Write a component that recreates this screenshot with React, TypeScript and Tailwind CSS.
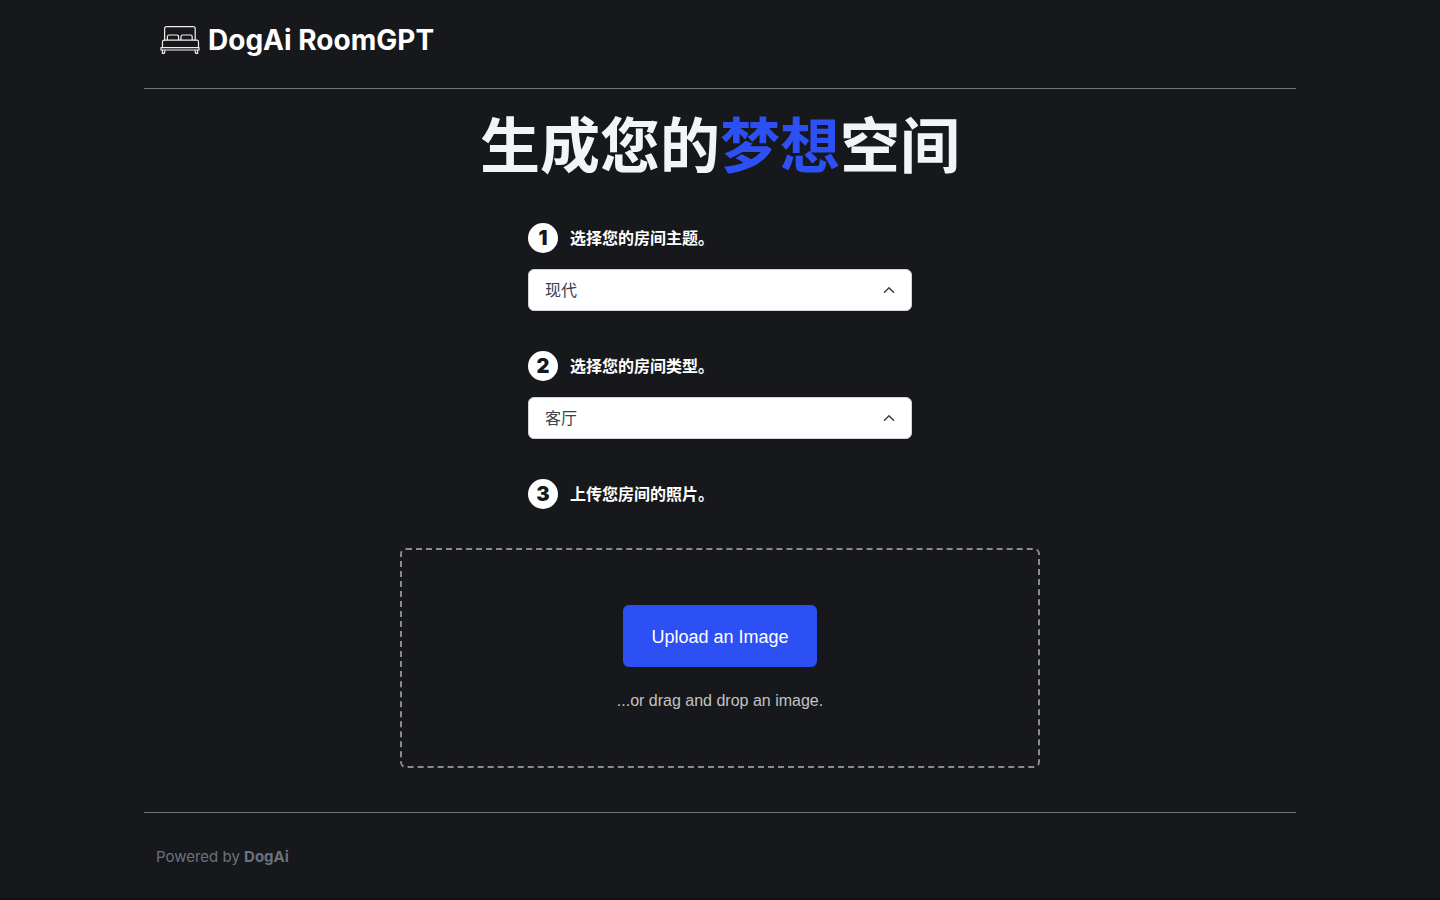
import React, { useState } from "react";
import { ChevronUp } from "lucide-react";

function BedIcon() {
  return (
    <svg viewBox="0 0 40 30" className="h-[30px] w-10 shrink-0" fill="none" stroke="#f1efea" strokeWidth="1.2" strokeLinejoin="round" aria-hidden="true">
      <path d="M4.6 15.5V3.6A2 2 0 0 1 6.600 1.600H33.200A2 2 0 0 1 35.200 3.600V15.500" />
      <path d="M7.400 15V11.800A1.800 1.800 0 0 1 9.200 10H16.800A1.800 1.800 0 0 1 18.600 11.800V15M21 15V11.800A1.800 1.800 0 0 1 22.800 10H30.400A1.800 1.800 0 0 1 32.200 11.800V15" />
      <path d="M2.500 22.500V16.800A1.600 1.600 0 0 1 4.100 15.200H36.900A1.600 1.600 0 0 1 38.500 16.800V22.500" />
      <path d="M1 22.600H39V25H1Z" />
      <path d="M2.400 25V28.400H4.400L5 25M37.600 25V28.400H35.600L35 25" />
    </svg>
  );
}

function Step({ number, children, htmlFor }: { number: number; children: React.ReactNode; htmlFor: string }) {
  return (
    <div className="flex items-center gap-3">
      <span className="flex size-[30px] items-center justify-center rounded-full bg-white font-['Inter',sans-serif] text-xl leading-5 font-black text-[#17181c]">
        {number}
      </span>
      <label htmlFor={htmlFor} className="text-base font-bold text-white">
        {children}
      </label>
    </div>
  );
}

function DropDown({ id, options }: { id: string; options: string[] }) {
  const [value, setValue] = useState(options[0]);
  return (
    <div className="relative mt-4">
      <select
        id={id}
        value={value}
        onChange={(e) => setValue(e.target.value)}
        className="block h-[42px] w-full appearance-none rounded-md border border-[#d1d5db] bg-white px-4 text-base text-[#374151]"
      >
        {options.map((o) => (
          <option key={o}>{o}</option>
        ))}
      </select>
      <ChevronUp className="pointer-events-none absolute top-3 right-3.5 size-[18px] text-[#374151]" strokeWidth={2} />
    </div>
  );
}

export default function App() {
  return (
    <div className="min-h-screen border-b-4 border-[#151019] bg-[#17181c] font-['Inter','Noto_Sans_CJK_SC',sans-serif]">
      <div className="mx-auto flex max-w-6xl flex-col">
        <header className="border-b border-[#6b7280] px-4 pt-5 pb-7">
          <a href="/" className="inline-flex items-center gap-2 align-top">
            <BedIcon />
            <span className="text-[28px] leading-10 font-bold text-white">DogAi RoomGPT</span>
          </a>
        </header>
        <main className="flex flex-col items-center pt-[21px] pb-11">
          <h1 className="text-6xl leading-[72px] font-bold text-[#f1f5f9]">
            生成您的<span className="text-[#2d50f5]">梦想</span>空间
          </h1>
          <div className="mt-[41px] flex w-full max-w-sm flex-col gap-10">
            <div>
              <Step number={1} htmlFor="theme">选择您的房间主题。</Step>
              <DropDown id="theme" options={["现代", "复古", "简约", "热带"]} />
            </div>
            <div>
              <Step number={2} htmlFor="room">选择您的房间类型。</Step>
              <DropDown id="room" options={["客厅", "卧室", "浴室", "餐厅"]} />
            </div>
            <Step number={3} htmlFor="photo">上传您房间的照片。</Step>
          </div>
          <div className="mt-[39px] flex h-[220px] w-full max-w-[640px] flex-col items-center justify-center gap-6 rounded-md border-2 border-dashed border-[#8b8b8b] font-['Liberation_Sans',Arial,sans-serif]">
            <button id="photo" type="button" className="rounded-md bg-[#2d50f5] px-7 pt-[19px] pb-[17px] text-lg leading-[26px] text-white">
              Upload an Image
            </button>
            <p className="text-base leading-5 text-[#c2c2c4]">...or drag and drop an image.</p>
          </div>
        </main>
        <footer className="border-t border-[#6b7280] px-3 pt-8 pb-7 text-[15px] leading-6 text-[#6b7280]">
          Powered by <a href="/" className="font-bold">DogAi</a>
        </footer>
      </div>
    </div>
  );
}
